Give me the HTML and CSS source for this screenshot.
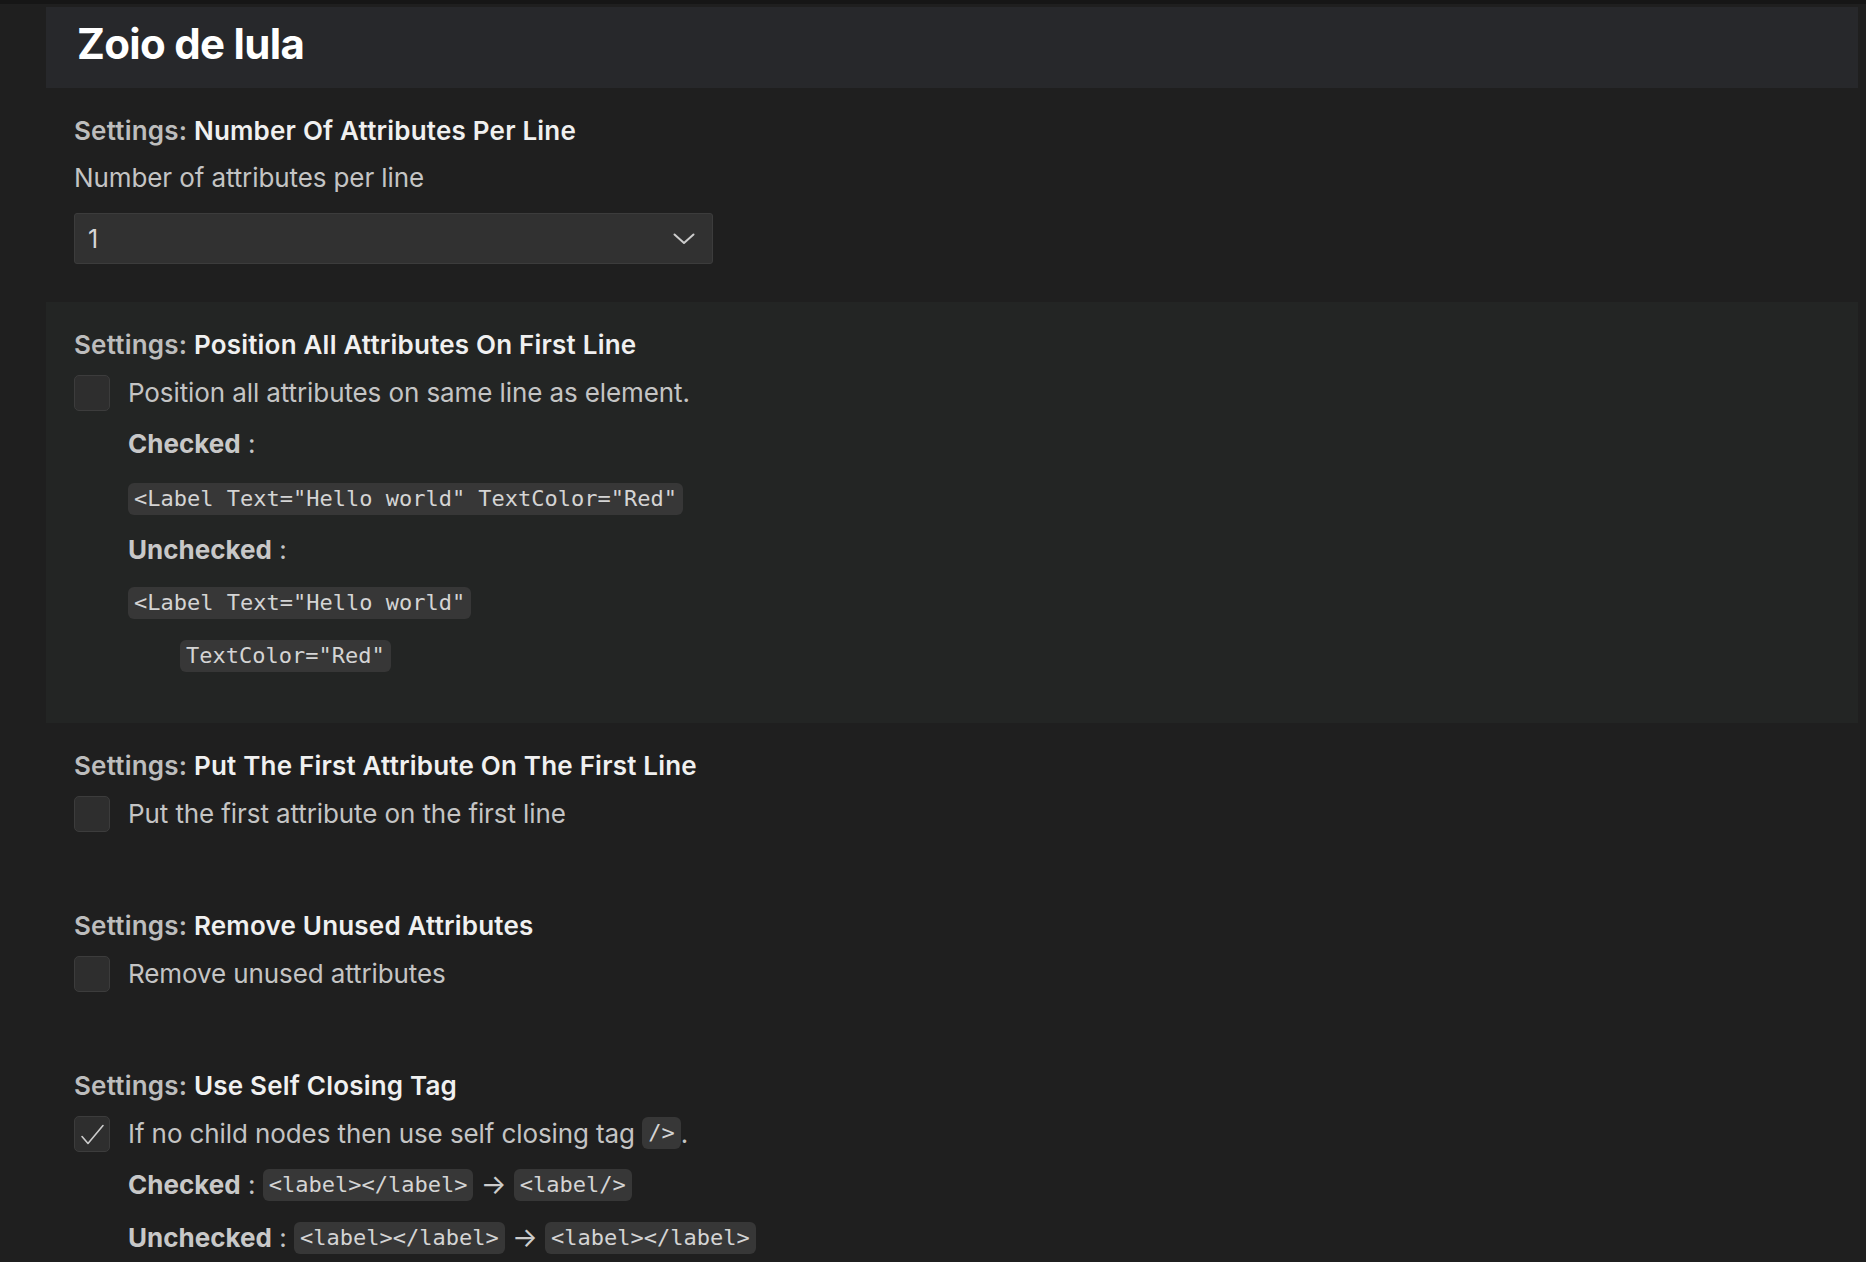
FILE: index.html
```html
<!DOCTYPE html>
<html lang="en">
<head>
<meta charset="utf-8">
<title>Zoio de lula</title>
<link rel="stylesheet" href="styles.css">
</head>
<body>
<div class="top-band"></div>
<div class="editor">
  <div class="header"><h1 class="title">Zoio de lula</h1></div>

  <div class="setting setting-select">
    <div class="setting-title"><span class="cat">Settings: </span><span class="name">Number Of Attributes Per Line</span></div>
    <div class="desc">Number of attributes per line</div>
    <div class="select">
      <span class="select-value">1</span>
      <svg class="chevron" width="22" height="12" viewBox="0 0 22 12"><path d="M1.5 1.5 L11 10 L20.5 1.5" fill="none" stroke="#cccccc" stroke-width="2" stroke-linecap="round" stroke-linejoin="round"/></svg>
    </div>
  </div>

  <div class="setting setting-bool focused">
    <div class="setting-title"><span class="cat">Settings: </span><span class="name">Position All Attributes On First Line</span></div>
    <div class="check-row">
      <span class="checkbox"></span>
      <span class="check-label">Position all attributes on same line as element.</span>
    </div>
    <div class="details">
      <div class="line"><b>Checked</b> :</div>
      <div class="line code-line"><code>&lt;Label Text="Hello world" TextColor="Red"</code></div>
      <div class="line"><b>Unchecked</b> :</div>
      <div class="line"><code>&lt;Label Text="Hello world"</code></div>
      <div class="line indent"><code>TextColor="Red"</code></div>
    </div>
  </div>

  <div class="setting setting-bool">
    <div class="setting-title"><span class="cat">Settings: </span><span class="name">Put The First Attribute On The First Line</span></div>
    <div class="check-row">
      <span class="checkbox"></span>
      <span class="check-label">Put the first attribute on the first line</span>
    </div>
  </div>

  <div class="setting setting-bool">
    <div class="setting-title"><span class="cat">Settings: </span><span class="name">Remove Unused Attributes</span></div>
    <div class="check-row">
      <span class="checkbox"></span>
      <span class="check-label">Remove unused attributes</span>
    </div>
  </div>

  <div class="setting setting-bool">
    <div class="setting-title"><span class="cat">Settings: </span><span class="name">Use Self Closing Tag</span></div>
    <div class="check-row">
      <span class="checkbox checked">
        <svg width="26" height="26" viewBox="0 0 26 26"><path d="M3 15.5 L9 22.5 L24 4.5" fill="none" stroke="#cccccc" stroke-width="1.6" stroke-linecap="round" stroke-linejoin="round"/></svg>
      </span>
      <span class="check-label">If no child nodes then use self closing tag <code>/&gt;</code>.</span>
    </div>
    <div class="details">
      <div class="line"><b>Checked</b> : <code>&lt;label&gt;&lt;/label&gt;</code> <span class="arrow">→</span> <code>&lt;label/&gt;</code></div>
      <div class="line"><b>Unchecked</b> : <code>&lt;label&gt;&lt;/label&gt;</code> <span class="arrow">→</span> <code>&lt;label&gt;&lt;/label&gt;</code></div>
    </div>
  </div>
</div>
</body>
</html>
```

FILE: styles.css
```css
html, body {
  margin: 0;
  padding: 0;
  background: #1f1f1f;
  height: 100%;
  overflow: hidden;
}

body {
  font-family: Inter, "Noto Sans", "Liberation Sans", sans-serif;
  color: #c4c4c4;
}

.top-band {
  height: 4px;
  background: #161616;
  margin-bottom: 3px;
}

.editor {
  margin-left: 46px;
  width: 1812px;
}

.header {
  background: #27282b;
  height: 81px;
  box-sizing: border-box;
  padding: 12px 0 0 31px;
}

.title {
  margin: 0;
  font-size: 42px;
  line-height: 50px;
  font-weight: 700;
  color: #ffffff;
  letter-spacing: -0.7px;
}

.setting {
  padding: 28px 28px 51px 28px;
}

.setting-select {
  padding-bottom: 38px;
}

.focused {
  background: #232524;
}

.setting-title {
  font-size: 26px;
  line-height: 30px;
  font-weight: 600;
  letter-spacing: 0.2px;
}

.cat {
  color: #bdbdbd;
}

.name {
  color: #f0f0f0;
}

.desc {
  margin-top: 17px;
  font-size: 26px;
  line-height: 30px;
  color: #c4c4c4;
  letter-spacing: -0.1px;
}

.select {
  margin-top: 20px;
  width: 639px;
  height: 51px;
  box-sizing: border-box;
  background: #313131;
  border: 1px solid #3c3c3c;
  border-radius: 3px;
  display: flex;
  align-items: center;
  justify-content: space-between;
  padding: 0 17px 0 13px;
}

.select-value {
  font-size: 25px;
  color: #d6d6d6;
}

.chevron {
  display: block;
}

.check-row {
  margin-top: 15px;
  display: flex;
  align-items: center;
  gap: 18px;
  height: 36px;
}

.checkbox {
  width: 36px;
  height: 36px;
  box-sizing: border-box;
  flex: none;
  background: #2e2e2e;
  border: 1px solid #3c3c3c;
  border-radius: 5px;
  display: flex;
  align-items: center;
  justify-content: center;
}

.check-label {
  font-size: 26px;
  line-height: 30px;
  color: #c4c4c4;
  letter-spacing: -0.1px;
}

.details {
  margin-left: 54px;
  margin-top: 17px;
  display: flex;
  flex-direction: column;
  gap: 21px;
}

.line {
  height: 32px;
  line-height: 32px;
  font-size: 26px;
  color: #c4c4c4;
  white-space: pre;
}

.code-line {
  margin-top: 2px;
  margin-bottom: -2px;
}

.line b {
  font-weight: 700;
  color: #c8c8c8;
}

.indent {
  padding-left: 52px;
}

code {
  font-family: "DejaVu Sans Mono", "Liberation Mono", monospace;
  font-size: 22px;
  line-height: 32px;
  height: 32px;
  display: inline-block;
  vertical-align: top;
  background: #373737;
  color: #d4d4d4;
  border-radius: 6px;
  padding: 0 6px;
  white-space: pre;
  letter-spacing: 0;
}

.check-label code {
  vertical-align: middle;
  margin-top: -4px;
}

.arrow {
  font-family: Inter, "DejaVu Sans", sans-serif;
  color: #cccccc;
  font-size: 27px;
  display: inline-block;
}
```
